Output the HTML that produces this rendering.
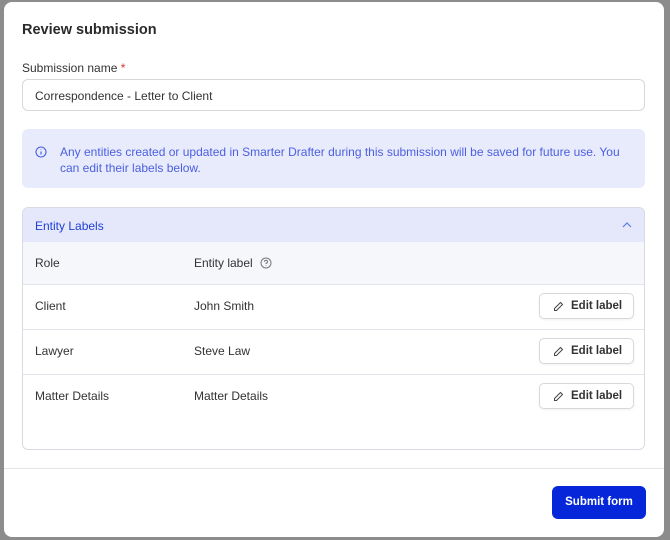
<!DOCTYPE html><html><head><style>
*{box-sizing:border-box;margin:0;padding:0}
body{width:670px;height:540px;background:#8c8c8c;font-family:"Liberation Sans",sans-serif;position:relative;overflow:hidden;color:#333}
.m{position:absolute;left:4px;top:2px;width:660px;height:535px;background:#fff;border-radius:8px}
.a{position:absolute}
.t{left:18px;top:20px;font-size:14.5px;font-weight:bold;color:#2a2a2a}
.l{left:18px;top:59px;font-size:12px;color:#333}
.in{left:18px;top:77px;width:623px;height:32px;border:1px solid #d8d8dc;border-radius:6px;font-size:12px;padding:9px 12px;color:#333}
.info{left:18px;top:127px;width:623px;height:59px;background:#e8ebfc;border-radius:6px;color:#4b5fe0;font-size:12px;line-height:16px;padding:15px 20px 0 38px}
.acc{left:18px;top:205px;width:623px;height:243px;border:1px solid #d8dbe2;border-radius:6px;overflow:hidden}
.h{height:34px;background:#e5e8fb;color:#1f3fd8;font-size:12px;padding:11px 12px;position:relative;line-height:14px}
.sh{height:43px;background:#f6f7fa;border-bottom:1px solid #e3e5ea;font-size:12px;position:relative;line-height:14px}
.r{height:45px;border-bottom:1px solid #e3e5ea;font-size:12px;position:relative;line-height:14px}
.c1{position:absolute;left:12px;top:14px}.c2{position:absolute;left:171px;top:14px}
.sh .c1,.sh .c2{top:14px}
.b{position:absolute;right:10px;top:8px;width:95px;height:26px;border:1px solid #d8d8dc;border-radius:5px;font-size:11.5px;font-weight:bold;color:#333;padding:6px 0 0 31px;box-shadow:0 1px 2px rgba(0,0,0,.06);line-height:13px}
.b svg{position:absolute;left:13px;top:7px}
.ft{left:0;top:466px;width:660px;border-top:1px solid #e3e5ea}
.sub{left:548px;top:484px;width:94px;height:33px;background:#0527d9;border-radius:6px;color:#fff;font-size:11.5px;font-weight:bold;text-align:center;line-height:33px}
</style></head><body><div class="m">
<div class="a t">Review submission</div>
<div class="a l">Submission name <span style="color:#e03030">*</span></div>
<div class="a in">Correspondence - Letter to Client</div>
<div class="a info"><svg class="a" style="left:13px;top:17px" width="12" height="12" viewBox="0 0 12 12"><circle cx="6" cy="6" r="5" fill="none" stroke="#4b5fe0" stroke-width="1.1"/><path d="M6 5.5v3M6 3.5v.5" stroke="#4b5fe0" stroke-width="1.2"/></svg>Any entities created or updated in Smarter Drafter during this submission will be saved for future use. You can edit their labels below.</div>
<div class="a acc">
<div class="h">Entity Labels<svg style="position:absolute;right:12px;top:14px" width="10" height="6" viewBox="0 0 10 6"><path d="M1 5l4-4 4 4" fill="none" stroke="#5c7ae8" stroke-width="1.2"/></svg></div>
<div class="sh"><span class="c1">Role</span><span class="c2">Entity label <svg style="vertical-align:-2px;margin-left:4px" width="12" height="12" viewBox="0 0 12 12"><circle cx="6" cy="6" r="5" fill="none" stroke="#777" stroke-width="1"/><path d="M4.5 4.7a1.5 1.5 0 1 1 1.5 1.5v.8M6 8.3v.6" fill="none" stroke="#777" stroke-width="1"/></svg></span></div>
<div class="r"><span class="c1">Client</span><span class="c2">John Smith</span><div class="b"><svg width="11" height="11" viewBox="0 0 11 11"><path d="M7.5 1.5l2 2-6 6H1.5v-2z" fill="none" stroke="#444" stroke-width="1"/></svg>Edit label</div></div>
<div class="r"><span class="c1">Lawyer</span><span class="c2">Steve Law</span><div class="b"><svg width="11" height="11" viewBox="0 0 11 11"><path d="M7.5 1.5l2 2-6 6H1.5v-2z" fill="none" stroke="#444" stroke-width="1"/></svg>Edit label</div></div>
<div class="r" style="border:0"><span class="c1">Matter Details</span><span class="c2">Matter Details</span><div class="b"><svg width="11" height="11" viewBox="0 0 11 11"><path d="M7.5 1.5l2 2-6 6H1.5v-2z" fill="none" stroke="#444" stroke-width="1"/></svg>Edit label</div></div>
</div>
<div class="a ft"></div>
<div class="a sub">Submit form</div>
</div></body></html>
